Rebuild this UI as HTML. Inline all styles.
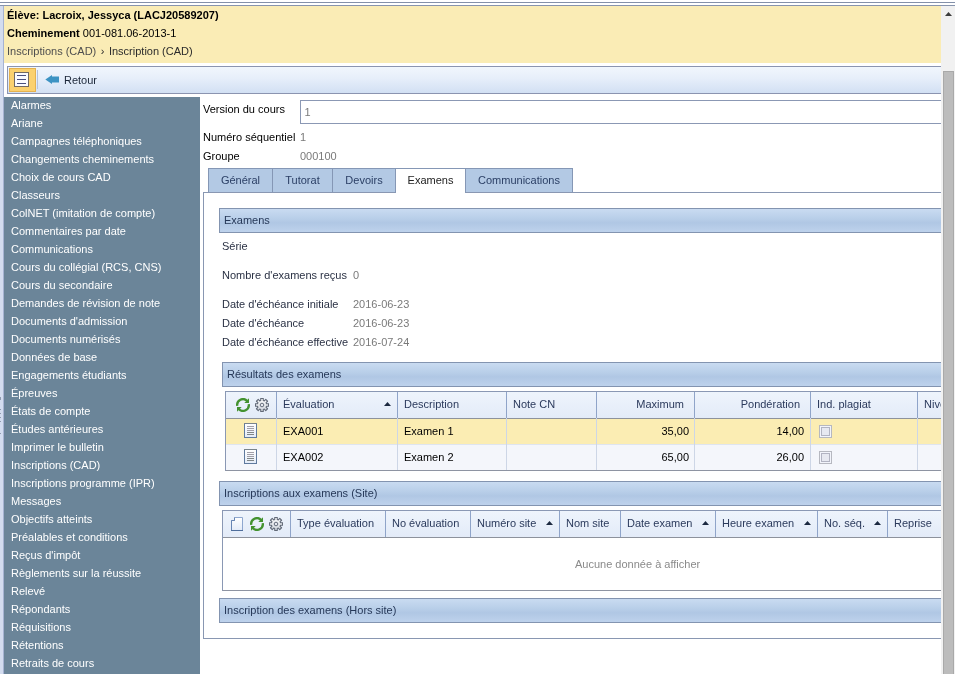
<!DOCTYPE html>
<html lang="fr">
<head>
<meta charset="utf-8">
<title>Inscription (CAD)</title>
<style>
html,body{margin:0;padding:0;}
body{width:955px;height:674px;overflow:hidden;background:#fff;position:relative;
  font-family:"Liberation Sans",sans-serif;font-size:11px;line-height:18px;color:#000;}
#w{position:absolute;left:0;top:0;width:955px;height:674px;overflow:hidden;will-change:transform;background:#fff;}
.a{position:absolute;white-space:nowrap;}
.g{color:#7a7a7a;}
.d{color:#2a3144;}
/* outer frame */
#l1{left:0;top:2px;width:955px;height:1px;background:#8390a9;}
#l2{left:0;top:5px;width:955px;height:1px;background:#8794ad;}
#lav{left:0;top:6px;width:3px;height:668px;background:#d3dcef;}
#lavb{left:3px;top:6px;width:1px;height:668px;background:#a6b3d2;}
#hdr{left:4px;top:6px;width:937px;height:57px;background:#faecb5;}
#hdr div{left:3px;}
/* toolbar */
#tb{left:7px;top:66px;width:940px;height:26px;border:1px solid #8b94b0;
  background:linear-gradient(#f1f6fd 0%,#e6eefa 45%,#d2e0f3 100%);}
#btn{left:9px;top:68px;width:25px;height:22px;border:1px solid #e5b24f;background:#fbd16f;}
#sep{left:37px;top:70px;width:1px;height:19px;background:#b4c3dc;}
/* sidebar */
#sb{left:4px;top:97px;width:196px;height:577px;background:#6b8599;color:#fff;}
#sb div{position:absolute;left:7px;white-space:nowrap;}
/* main clip */
#main{left:200px;top:94px;width:741px;height:580px;overflow:hidden;}
#main .a{}
.inp{left:100px;top:6px;width:700px;height:22px;border:1px solid #8b98b4;background:#fff;}
/* tabs */
.tab{top:74px;height:23px;border:1px solid #8597b5;border-bottom:none;background:#b3c9e4;color:#2c4066;text-align:center;line-height:23px;}
.tab.on{background:#fff;height:24px;color:#222;z-index:3;}
#panel{left:3px;top:98px;width:800px;height:445px;border:1px solid #8997b2;background:#fff;}
.sh{height:23px;border:1px solid #8394b0;width:800px;color:#263858;line-height:23px;
  background:linear-gradient(#c9dbf1 0%,#b9cfe9 40%,#b0c7e4 60%,#bed2ec 100%);}
.sh span{position:absolute;left:4px;top:0;}
/* grids */
.grid{border:1px solid #8a98b4;border-bottom-color:#8e94a2;background:#fff;width:800px;}
.gh{left:0;top:0;width:800px;height:26px;background:linear-gradient(#eef4fc 0%,#e3ebf8 100%);border-bottom:1px solid #8d929c;}
.cs{top:0;width:1px;background:#cdd6e6;}
.cs.h{background:#8fa4c9;height:26px;}
.ht{top:3px;color:#2b3a5c;}
.row{left:0;width:800px;height:25px;}
.ar{width:7px;height:4px;background:#1c2940;clip-path:polygon(50% 0,100% 100%,0 100%);}
.cb{width:7px;height:7px;background:#e7e9f1;border:1px solid #b2b4c2;box-shadow:0 0 0 1px #f2f4fb,0 0 0 2px #b6b8c0;}
/* scrollbar */
#scr{left:941px;top:6px;width:14px;height:668px;background:#f1f1f1;}
#thumb{left:943px;top:71px;width:9px;height:603px;background:#bcbcbc;border:1px solid #a9a9a9;border-bottom:none;}
#up{left:945px;top:12px;width:7px;height:4px;background:#3c3c3c;clip-path:polygon(50% 0,100% 100%,0 100%);}
</style>
</head>
<body>
<div id="w">
<svg width="0" height="0" style="position:absolute">
  <defs>
    <linearGradient id="gg" x1="0" y1="0" x2="0" y2="1"><stop offset="0" stop-color="#ffffff"/><stop offset="1" stop-color="#cfd4dc"/></linearGradient>
    <linearGradient id="dg" x1="0" y1="0" x2="0" y2="1"><stop offset="0" stop-color="#ffffff"/><stop offset="1" stop-color="#e3ebf8"/></linearGradient>
    <linearGradient id="rg" x1="0" y1="0" x2="0" y2="1"><stop offset="0" stop-color="#4c9c38"/><stop offset="1" stop-color="#3a8a2c"/></linearGradient>
    <symbol id="i-ref" viewBox="0 0 14 14">
      <g id="half">
        <path d="M1.25 7.9 A5.8 5.8 0 0 1 11.2 3.0" fill="none" stroke="#43922f" stroke-width="2.3"/>
        <path d="M13 0.3 L13 4.9 L8.3 4.9 Z" fill="#43922f"/>
      </g>
      <use href="#half" transform="rotate(180 7 7)"/>
    </symbol>
    <symbol id="i-gear" viewBox="0 0 14 14">
      <path d="M5.75 2.47 L5.73 0.42 L8.27 0.42 L8.25 2.47 L9.32 2.91 L10.76 1.45 L12.55 3.24 L11.09 4.68 L11.53 5.75 L13.58 5.73 L13.58 8.27 L11.53 8.25 L11.09 9.32 L12.55 10.76 L10.76 12.55 L9.32 11.09 L8.25 11.53 L8.27 13.58 L5.73 13.58 L5.75 11.53 L4.68 11.09 L3.24 12.55 L1.45 10.76 L2.91 9.32 L2.47 8.25 L0.42 8.27 L0.42 5.73 L2.47 5.75 L2.91 4.68 L1.45 3.24 L3.24 1.45 L4.68 2.91 Z" fill="url(#gg)" stroke="#626a78" stroke-width="1.1" stroke-linejoin="round"/>
      <circle cx="7" cy="7" r="1.8" fill="#e6e8ee" stroke="#666e7d" stroke-width="1"/>
    </symbol>
    <symbol id="i-doc" viewBox="0 0 13 15">
      <rect x="0.5" y="0.5" width="12" height="14" fill="url(#dg)" stroke="#5f7a9e"/>
      <path d="M0 0.5h13" stroke="#79848c"/>
      <path d="M3 3.5h7M3 5.5h7M3 7.5h7" stroke="#a19fa8"/>
      <path d="M3 9.5h7M3 11.5h7" stroke="#808686"/>
    </symbol>
    <symbol id="i-new" viewBox="0 0 12 14">
      <path d="M3.5 0.5 H11.5 V13.5 H0.5 V3.5 H3.5 Z" fill="url(#dg)" stroke="#8ea7cf"/>
      <path d="M3.5 0.5 V3.5 H0.5 V13.5" fill="none" stroke="#6785b3"/>
      <path d="M0 13.5h12" stroke="#4f6e9c"/>
    </symbol>
  </defs>
</svg>
<div class="a" id="l1"></div>
<div class="a" id="l2"></div>
<div class="a" id="lav"></div>
<div class="a" id="lavb"></div>

<div class="a" style="left:0;top:397px;width:1px;height:3px;background:#8f9aae;"></div>
<div class="a" style="left:0;top:409px;width:1px;height:1px;background:#8f9aae;"></div>
<div class="a" style="left:0;top:413px;width:1px;height:1px;background:#8f9aae;"></div>
<div class="a" style="left:0;top:417px;width:1px;height:1px;background:#8f9aae;"></div>
<div class="a" style="left:0;top:421px;width:1px;height:1px;background:#8f9aae;"></div>
<div class="a" style="left:0;top:433px;width:1px;height:1px;background:#8f9aae;"></div>
<div class="a" id="hdr">
  <div class="a" style="top:0;font-weight:bold;">Élève: Lacroix, Jessyca (LACJ20589207)</div>
  <div class="a" style="top:18px;"><b>Cheminement</b> 001-081.06-2013-1</div>
  <div class="a" style="top:36px;color:#2b2b2b;"><span style="color:#4e4e4e">Inscriptions (CAD)</span><span style="margin:0 4.5px 0 4.5px">›</span>Inscription (CAD)</div>
</div>

<div class="a" id="tb"></div>
<div class="a" id="btn">
  <svg class="a" style="left:4px;top:3px" width="15" height="15" viewBox="0 0 15 15">
    <rect x="0.5" y="0.5" width="14" height="14" fill="#fbfbff" stroke="#726a63" stroke-width="1"/>
    <path d="M3 3.5h9M3 7.5h9M3 11.5h9" stroke="#4a5080" stroke-width="1"/>
  </svg>
</div>
<div class="a" id="sep"></div>
<svg class="a" style="left:45px;top:74px" width="15" height="11" viewBox="0 0 15 11">
  <path d="M0.3 5.5 L7 1 L7 2.4 L14 2.4 L14 8.4 L7 8.4 L7 10 Z" fill="#3d93c3"/>
</svg>
<div class="a" style="left:64px;top:71px;color:#1b2638;">Retour</div>

<div class="a" id="sb">
  <div style="top:-1px">Alarmes</div>
  <div style="top:17px">Ariane</div>
  <div style="top:35px">Campagnes téléphoniques</div>
  <div style="top:53px">Changements cheminements</div>
  <div style="top:71px">Choix de cours CAD</div>
  <div style="top:89px">Classeurs</div>
  <div style="top:107px">ColNET (imitation de compte)</div>
  <div style="top:125px">Commentaires par date</div>
  <div style="top:143px">Communications</div>
  <div style="top:161px">Cours du collégial (RCS, CNS)</div>
  <div style="top:179px">Cours du secondaire</div>
  <div style="top:197px">Demandes de révision de note</div>
  <div style="top:215px">Documents d'admission</div>
  <div style="top:233px">Documents numérisés</div>
  <div style="top:251px">Données de base</div>
  <div style="top:269px">Engagements étudiants</div>
  <div style="top:287px">Épreuves</div>
  <div style="top:305px">États de compte</div>
  <div style="top:323px">Études antérieures</div>
  <div style="top:341px">Imprimer le bulletin</div>
  <div style="top:359px">Inscriptions (CAD)</div>
  <div style="top:377px">Inscriptions programme (IPR)</div>
  <div style="top:395px">Messages</div>
  <div style="top:413px">Objectifs atteints</div>
  <div style="top:431px">Préalables et conditions</div>
  <div style="top:449px">Reçus d'impôt</div>
  <div style="top:467px">Règlements sur la réussite</div>
  <div style="top:485px">Relevé</div>
  <div style="top:503px">Répondants</div>
  <div style="top:521px">Réquisitions</div>
  <div style="top:539px">Rétentions</div>
  <div style="top:557px">Retraits de cours</div>
</div>

<!-- main area: origin (200,94) -->
<div class="a" id="main">
  <div class="a" style="left:3px;top:6px;">Version du cours</div>
  <div class="a inp"><div class="a g" style="left:3.5px;top:2px;">1</div></div>
  <div class="a" style="left:3px;top:34px;">Numéro séquentiel</div>
  <div class="a g" style="left:100px;top:34px;">1</div>
  <div class="a" style="left:3px;top:53px;">Groupe</div>
  <div class="a g" style="left:100px;top:53px;">000100</div>

  <div class="a" id="panel"></div>

  <div class="a tab" style="left:8px;width:63px;">Général</div>
  <div class="a tab" style="left:72px;width:59px;">Tutorat</div>
  <div class="a tab" style="left:132px;width:62px;">Devoirs</div>
  <div class="a tab on" style="left:195px;width:69px;">Examens</div>
  <div class="a tab" style="left:265px;width:106px;">Communications</div>

  <div class="a sh" style="left:19px;top:114px;"><span>Examens</span></div>
  <div class="a d" style="left:22px;top:143px;">Série</div>
  <div class="a d" style="left:22px;top:172px;">Nombre d'examens reçus</div>
  <div class="a g" style="left:153px;top:172px;">0</div>
  <div class="a d" style="left:22px;top:201px;">Date d'échéance initiale</div>
  <div class="a g" style="left:153px;top:201px;">2016-06-23</div>
  <div class="a d" style="left:22px;top:220px;">Date d'échéance</div>
  <div class="a g" style="left:153px;top:220px;">2016-06-23</div>
  <div class="a d" style="left:22px;top:239px;">Date d'échéance effective</div>
  <div class="a g" style="left:153px;top:239px;">2016-07-24</div>

  <div class="a sh" style="left:22px;top:268px;"><span>Résultats des examens</span></div>

  <!-- grid 1 : origin (225,391) => main (25,297) -->
  <div class="a grid" style="left:25px;top:297px;height:78px;">
    <div class="a row" style="top:27px;background:#fbedb3;"></div>
    <div class="a row" style="top:52px;height:1px;background:#dfe5ef;"></div>
    <div class="a row" style="top:53px;background:#f4f6fb;"></div>
    <div class="a gh"></div>
    <div class="a cs" style="left:50px;height:78px;"></div>
    <div class="a cs" style="left:171px;height:78px;"></div>
    <div class="a cs" style="left:280px;height:78px;"></div>
    <div class="a cs" style="left:370px;height:78px;"></div>
    <div class="a cs" style="left:468px;height:78px;"></div>
    <div class="a cs" style="left:584px;height:78px;"></div>
    <div class="a cs" style="left:691px;height:78px;"></div>

    <div class="a cs h" style="left:50px;"></div>
    <div class="a cs h" style="left:171px;"></div>
    <div class="a cs h" style="left:280px;"></div>
    <div class="a cs h" style="left:370px;"></div>
    <div class="a cs h" style="left:468px;"></div>
    <div class="a cs h" style="left:584px;"></div>
    <div class="a cs h" style="left:691px;"></div>
    <svg class="a" style="left:10px;top:6px" width="14" height="14"><use href="#i-ref"/></svg>
    <svg class="a" style="left:29px;top:6px" width="14" height="14"><use href="#i-gear"/></svg>
    <svg class="a" style="left:18px;top:31px" width="13" height="15"><use href="#i-doc"/></svg>
    <svg class="a" style="left:18px;top:57px" width="13" height="15"><use href="#i-doc"/></svg>
    <div class="a ht" style="left:57px;">Évaluation</div>
    <div class="a ar" style="left:158px;top:10px;"></div>
    <div class="a ht" style="left:178px;">Description</div>
    <div class="a ht" style="left:287px;">Note CN</div>
    <div class="a ht" style="right:342px;">Maximum</div>
    <div class="a ht" style="right:226px;">Pondération</div>
    <div class="a ht" style="left:591px;">Ind. plagiat</div>
    <div class="a ht" style="left:698px;">Niveau</div>

    <div class="a" style="left:57px;top:30px;">EXA001</div>
    <div class="a" style="left:178px;top:30px;">Examen 1</div>
    <div class="a" style="right:337px;top:30px;">35,00</div>
    <div class="a" style="right:222px;top:30px;">14,00</div>
    <div class="a cb" style="left:595px;top:35px;"></div>
    <div class="a" style="left:57px;top:56px;">EXA002</div>
    <div class="a" style="left:178px;top:56px;">Examen 2</div>
    <div class="a" style="right:337px;top:56px;">65,00</div>
    <div class="a" style="right:222px;top:56px;">26,00</div>
    <div class="a cb" style="left:595px;top:61px;"></div>
  </div>

  <div class="a sh" style="left:19px;top:387px;"><span>Inscriptions aux examens (Site)</span></div>

  <!-- grid 2 : origin (222,510) => main (22,416) -->
  <div class="a grid" style="left:22px;top:416px;height:79px;">
    <div class="a gh"></div>
    <div class="a cs h" style="left:67px;"></div>
    <div class="a cs h" style="left:162px;"></div>
    <div class="a cs h" style="left:247px;"></div>
    <div class="a cs h" style="left:336px;"></div>
    <div class="a cs h" style="left:397px;"></div>
    <div class="a cs h" style="left:492px;"></div>
    <div class="a cs h" style="left:594px;"></div>
    <div class="a cs h" style="left:664px;"></div>
    <svg class="a" style="left:8px;top:6px" width="12" height="14"><use href="#i-new"/></svg>
    <svg class="a" style="left:27px;top:6px" width="14" height="14"><use href="#i-ref"/></svg>
    <svg class="a" style="left:46px;top:6px" width="14" height="14"><use href="#i-gear"/></svg>
    <div class="a ht" style="left:74px;">Type évaluation</div>
    <div class="a ht" style="left:169px;">No évaluation</div>
    <div class="a ht" style="left:254px;">Numéro site</div>
    <div class="a ar" style="left:323px;top:10px;"></div>
    <div class="a ht" style="left:343px;">Nom site</div>
    <div class="a ht" style="left:404px;">Date examen</div>
    <div class="a ar" style="left:479px;top:10px;"></div>
    <div class="a ht" style="left:499px;">Heure examen</div>
    <div class="a ar" style="left:581px;top:10px;"></div>
    <div class="a ht" style="left:601px;">No. séq.</div>
    <div class="a ar" style="left:651px;top:10px;"></div>
    <div class="a ht" style="left:671px;">Reprise</div>
    <div class="a" style="left:352px;top:44px;color:#8a8a8a;">Aucune donnée à afficher</div>
  </div>

  <div class="a sh" style="left:19px;top:504px;"><span>Inscription des examens (Hors site)</span></div>
</div>

<div class="a" id="scr"></div>
<div class="a" id="thumb"></div>
<div class="a" id="up"></div>
</div>
</body>
</html>
